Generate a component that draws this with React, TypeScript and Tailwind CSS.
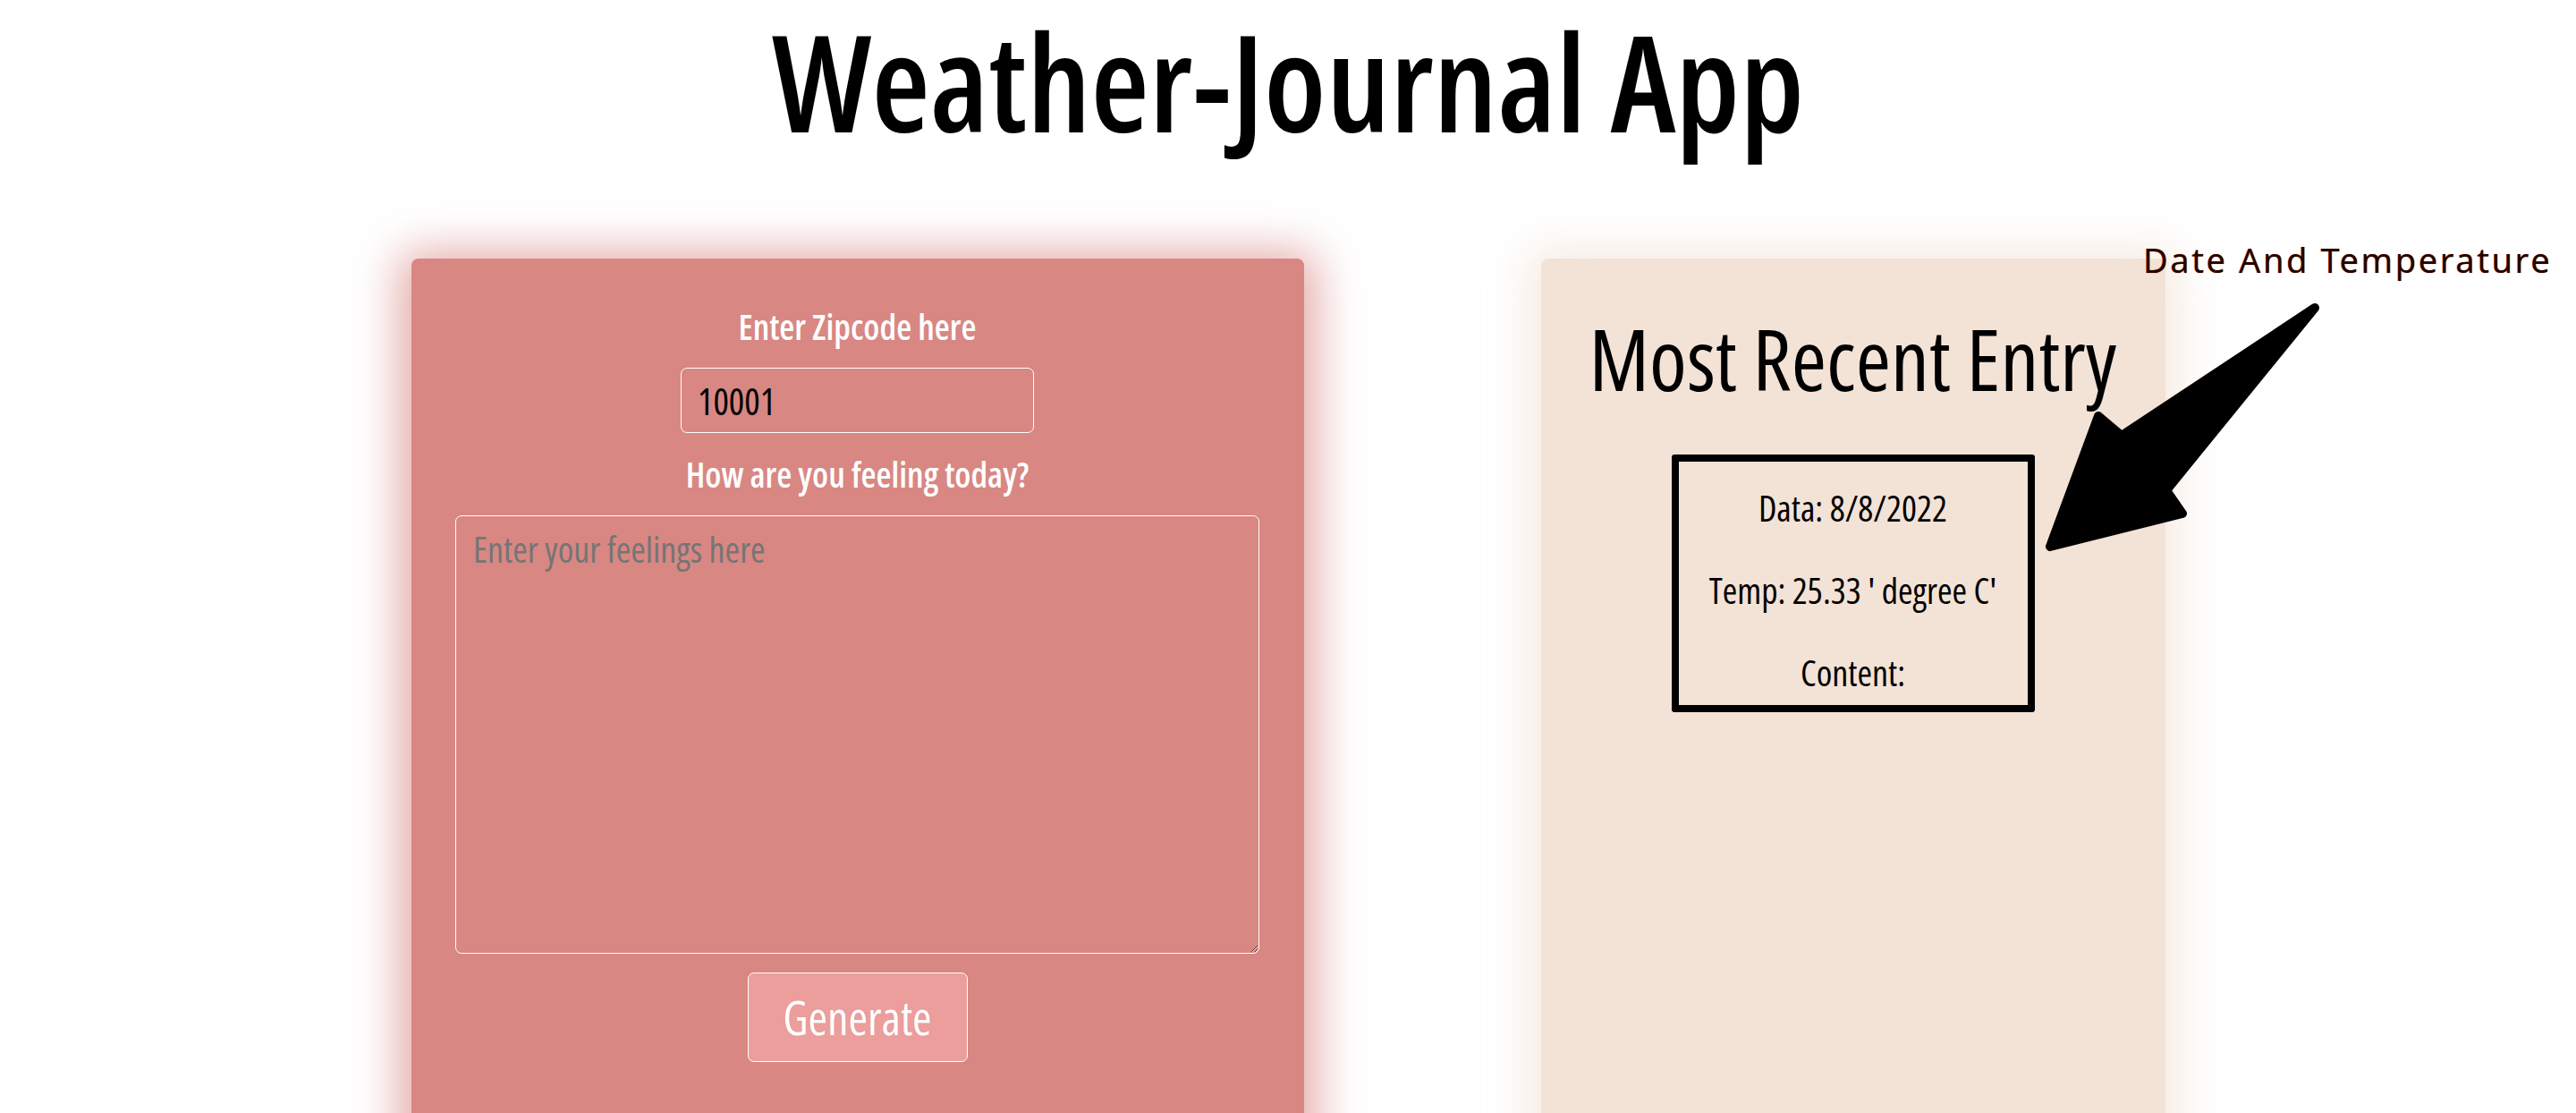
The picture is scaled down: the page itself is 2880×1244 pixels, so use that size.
import React from "react";

const Arrow = () => (
  <svg
    className="absolute left-[2280px] top-[330px]"
    width="330"
    height="300"
    viewBox="0 0 330 300"
  >
    <polygon
      points="308,14 92,157 66,135 12,281 160,244 142,218"
      fill="#000"
      stroke="#000"
      strokeWidth="10"
      strokeLinejoin="round"
    />
  </svg>
);

const EntryCard: React.FC = () => {
  return (
    <div className="w-[698px] h-[1000px] rounded-[8px] bg-[#f3e2d6] shadow-[0_4px_50px_14px_rgba(243,226,214,0.75)] flex flex-col items-center pt-[55px]">
      <h2 className="text-[95px] leading-[113px] font-medium text-black">Most Recent Entry</h2>
      <div className="mt-[51px] w-[406px] h-[288px] border-[8px] border-black rounded-[3px] flex flex-col items-center pt-[25px] gap-[38px] text-[40px] leading-[54px] text-black">
        <p>Data: 8/8/2022</p>
        <p>Temp: 25.33 ' degree C'</p>
        <p>Content:</p>
      </div>
    </div>
  );
};

const FormCard: React.FC = () => {
  return (
    <div className="w-[998px] h-[1000px] rounded-[8px] bg-[#d88783] shadow-[0_6px_50px_14px_rgba(216,135,131,0.7)] flex flex-col items-center pt-[49px] gap-[19px]">
      <label className="text-[39px] leading-[54px] font-semibold text-white">
        Enter Zipcode here
      </label>
      <input
        defaultValue="10001"
        className="w-[395px] h-[73px] rounded-[7px] border border-white bg-transparent px-[18px] text-[41px] text-black outline-none"
      />
      <label className="text-[39px] leading-[54px] font-semibold text-white">
        How are you feeling today?
      </label>
      <textarea
        placeholder="Enter your feelings here"
        className="w-[899px] h-[490px] rounded-[7px] border border-white bg-transparent px-[19px] pt-[10px] text-[40px] leading-[54px] text-black placeholder:text-[#757575] outline-none"
      />
      <button className="mt-[2px] w-[246px] h-[100px] rounded-[7px] border-[1.5px] border-white bg-[#eb9e9c] text-[52px] text-white">
        Generate
      </button>
    </div>
  );
};

export default function App() {
  return (
    <div className="relative min-h-screen w-full overflow-hidden bg-white font-['Open_Sans',sans-serif] font-stretch-condensed">
      <h1 className="text-center text-[150px] leading-[1.2] font-[570] text-black">
        Weather-Journal App
      </h1>
      <div className="mt-[109px] flex justify-center gap-[265px]">
        <FormCard />
        <EntryCard />
      </div>
      <span className="absolute left-[2396px] top-[271px] font-['Noto_Sans',sans-serif] font-stretch-normal text-[38px] leading-none tracking-[2.6px] text-[#220400] [text-shadow:0_0_1px_#d9480f]">
        Date And Temperature
      </span>
      <Arrow />
    </div>
  );
}
